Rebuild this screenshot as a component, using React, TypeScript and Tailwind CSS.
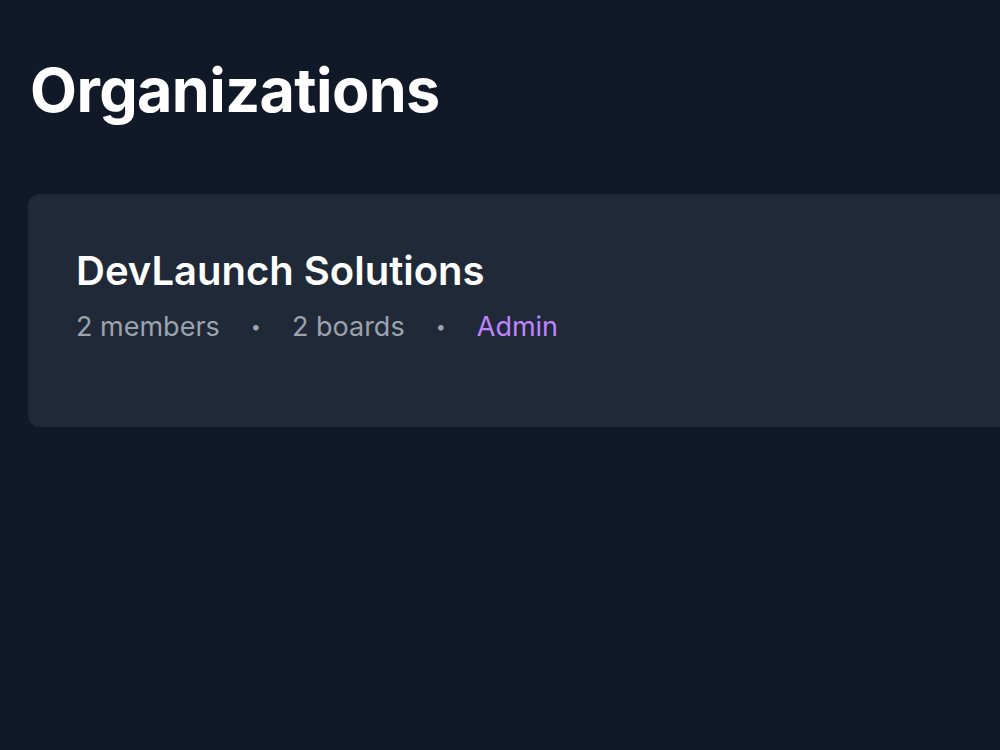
const org = {
  name: 'DevLaunch Solutions',
  members: 2,
  boards: 2,
  role: 'Admin',
}

export default function App() {
  return (
    <div className="min-h-screen w-full overflow-hidden bg-[#111827] font-['Inter',sans-serif]">
      <div className="px-7 pt-[50px]">
        <h1 className="pl-[2px] text-[61px] font-bold leading-[80px] tracking-[-0.01em] text-white">
          Organizations
        </h1>

        <div className="mt-[64px] w-[1100px] rounded-xl bg-[#1f2937] px-12 pb-[84px] pt-[53px]">
          <h2 className="text-[40px] font-semibold leading-[48px] text-white">{org.name}</h2>
          <div className="mt-4 flex items-center gap-[31px] text-[27px] leading-8 text-[#9ca3af]">
            <span>{org.members} members</span>
            <span className="text-[18px]">•</span>
            <span>{org.boards} boards</span>
            <span className="text-[18px]">•</span>
            <span className="text-[#c084fc]">{org.role}</span>
          </div>
        </div>
      </div>
    </div>
  )
}
